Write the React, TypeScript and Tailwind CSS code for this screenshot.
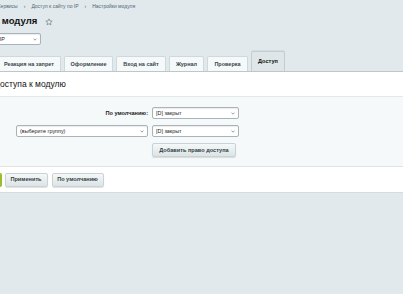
import React from "react";

function Chevron({ className = "" }: { className?: string }) {
  return (
    <svg width="4" height="3" viewBox="0 0 4 3" className={className}>
      <path d="M0.5 0.6 L2 2.2 L3.5 0.6" fill="none" stroke="#6d7a82" strokeWidth="0.7" />
    </svg>
  );
}

function Select({ text, className = "" }: { text: string; className?: string }) {
  return (
    <div
      className={`flex items-center justify-between h-[12px] bg-white border border-[#a9b4ba] rounded-[2px] pl-[3px] pr-[3px] text-[5.4px] text-[#222] shadow-[inset_0_1px_1px_rgba(0,0,0,0.08)] ${className}`}
    >
      <span className="whitespace-nowrap">{text}</span>
      <Chevron />
    </div>
  );
}

function Btn({ text, className = "" }: { text: string; className?: string }) {
  return (
    <div
      className={`flex items-center justify-center h-[14px] px-[6px] rounded-[2px] bg-gradient-to-b from-[#f5f8f8] to-[#dce4e6] border border-[#c9d2d6] shadow-[0_1px_1px_rgba(0,0,0,0.12)] text-[5.6px] font-bold text-[#333e45] whitespace-nowrap ${className}`}
    >
      {text}
    </div>
  );
}

const tabs = [
  { t: "Оформление", w: "w-[49px]" },
  { t: "Вход на сайт", w: "w-[50px]" },
  { t: "Журнал", w: "w-[35px]" },
  { t: "Проверка", w: "w-[41px]" },
];

export default function App() {
  return (
    <div className="w-[403px] h-[294px] overflow-hidden bg-[#e1e9ec] font-['Liberation_Sans',Arial,sans-serif]">
      {/* breadcrumb */}
      <div className="flex items-center h-[13px] gap-[6px] -ml-[3px] text-[5px] text-[#4f6878] whitespace-nowrap">
        <span>Сервисы</span>
        <span>›</span>
        <span>Доступ к сайту по IP</span>
        <span>›</span>
        <span>Настройки модуля</span>
      </div>

      {/* title */}
      <div className="flex items-center h-[17px] -ml-[51px] whitespace-nowrap">
        <span className="text-[9.5px] font-bold text-[#111]">Настройки модуля</span>
        <svg width="8" height="8" viewBox="0 0 24 24" className="ml-[8px] mt-[1px]">
          <path
            d="M12 2.5l2.9 6.2 6.6.7-5 4.5 1.4 6.6L12 17.1l-5.9 3.4 1.4-6.6-5-4.5 6.6-.7z"
            fill="none"
            stroke="#6b7a83"
            strokeWidth="2"
            strokeLinejoin="round"
          />
        </svg>
      </div>

      {/* site select */}
      <div className="mt-[3px] flex">
        <Select text="Доступ к сайту по IP" className="w-[92px] -ml-[51px] pl-[4px]" />
      </div>

      {/* tabs */}
      <div className="mt-[6px] flex items-end gap-[3px] h-[20px] whitespace-nowrap">
        <div className="-ml-[3px] w-[64px] h-[15px] flex items-center justify-center bg-[#f6f9f9] border border-b-0 border-[#cfd8db] rounded-t-[2px] text-[5.5px] font-bold text-[#3a454b]">
          Реакция на запрет
        </div>
        {tabs.map((tb) => (
          <div
            key={tb.t}
            className={`${tb.w} h-[15px] flex items-center justify-center bg-[#f6f9f9] border border-b-0 border-[#cfd8db] rounded-t-[2px] text-[5.5px] font-bold text-[#3a454b]`}
          >
            {tb.t}
          </div>
        ))}
        <div className="w-[34px] h-[20px] flex items-center justify-center bg-[#dfe6e8] border border-b-0 border-[#c3cdd1] rounded-t-[2px] shadow-[0_-1px_1px_rgba(0,0,0,0.05)] text-[5.6px] font-bold text-[#111]">
          Доступ
        </div>
      </div>

      {/* panel */}
      <div className="bg-white border-t border-[#bcc7cc] border-b border-b-[#d3dcdf]">
        <div className="h-[24px] flex items-center -ml-[40px] whitespace-nowrap text-[8.5px] text-[#111]">
          Уровень доступа к модулю
        </div>
        <div className="border-t border-[#e3e9eb] bg-[#f5f9f9] h-[70px] pt-[10px] flex flex-col">
          <div className="flex items-center h-[12px]">
            <div className="w-[148px] flex justify-end text-[5.6px] font-bold text-[#222] whitespace-nowrap">
              По умолчанию:
            </div>
            <Select text="[D] закрыт" className="ml-[4px] w-[87px]" />
          </div>
          <div className="flex items-center h-[12px] mt-[6px]">
            <div className="w-[148px] pl-[16px]">
              <Select text="(выберите группу)" className="w-full" />
            </div>
            <Select text="[D] закрыт" className="ml-[4px] w-[87px]" />
          </div>
          <div className="flex mt-[6px] pl-[152px]">
            <Btn text="Добавить право доступа" className="h-[13px] w-[84px] px-0" />
          </div>
        </div>
        <div className="border-t border-[#dde4e6] h-[26px] flex items-center gap-[3px]">
          <div className="-ml-[38px] w-[39.5px] h-[14px] rounded-[2px] bg-[#9bbd2a]" />
          <Btn text="Применить" className="w-[43px] px-0" />
          <Btn text="По умолчанию" className="w-[52px] px-0 ml-[1px]" />
        </div>
      </div>
    </div>
  );
}
